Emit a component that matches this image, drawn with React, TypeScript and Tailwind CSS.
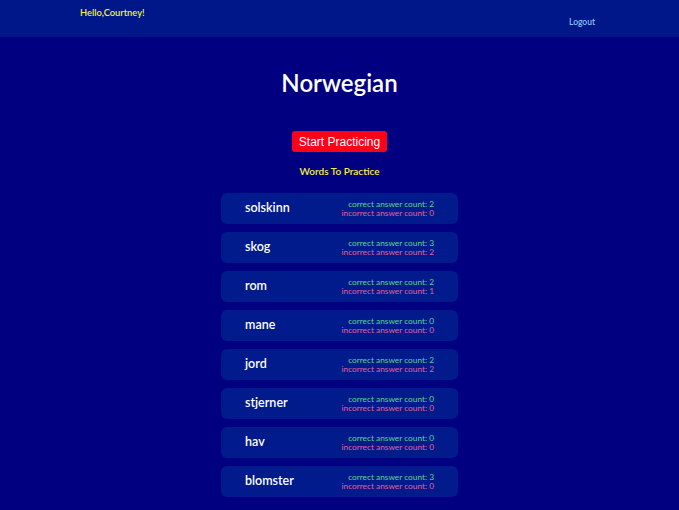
import React from 'react'

type Word = {
    word: string;
    correct: number;
    incorrect: number;
}

const words: Word[] = [
    { word: 'solskinn', correct: 2, incorrect: 0 },
    { word: 'skog', correct: 3, incorrect: 2 },
    { word: 'rom', correct: 2, incorrect: 1 },
    { word: 'mane', correct: 0, incorrect: 0 },
    { word: 'jord', correct: 2, incorrect: 2 },
    { word: 'stjerner', correct: 0, incorrect: 0 },
    { word: 'hav', correct: 0, incorrect: 0 },
    { word: 'blomster', correct: 3, incorrect: 0 },
]

function WordCard({ word, correct, incorrect }: Word) {
    return (
        <div className="w-[237px] h-[31px] bg-[#011b8c] rounded-[6px] flex items-center justify-between pl-6 pr-[24px]">
            <div className="text-[12.5px] font-semibold text-white">{word}</div>
            <div className="flex flex-col items-end text-[8.3px] leading-[9px]">
                <span className="text-[#5ed48f]">correct answer count: {correct}</span>
                <span className="text-[#e2609c]">incorrect answer count: {incorrect}</span>
            </div>
        </div>
    )
}

export default function App() {
    return (
        <div className="min-h-[510px] bg-[#000080] font-['Lato',sans-serif]">
            {/* Header */}
            <div className="h-[37px] bg-[#00178a] relative">
                <div className="absolute left-[80px] top-[6px] text-[9.3px] font-semibold text-[#f5f03c]">Hello,Courtney!</div>
                <div className="absolute left-[569px] top-[16px] text-[8.5px] font-semibold text-[#8cc0ec]">Logout</div>
            </div>

            <div className="flex flex-col items-center">
                <h1 className="mt-[30px] text-[24px] font-semibold text-white leading-[32px]">Norwegian</h1>
                <button className="mt-[32px] h-[21px] px-[7px] bg-[#ff0018] rounded-[3px] text-white text-[12px] font-['Liberation_Sans',sans-serif]">
                    Start Practicing
                </button>
                <div className="mt-[12px] text-[10px] font-semibold text-[#f5f03c]">Words To Practice</div>
                <div className="mt-[14px] flex flex-col gap-[8px]">
                    {words.map((w) => (
                        <WordCard key={w.word} {...w} />
                    ))}
                </div>
            </div>
        </div>
    )
}
